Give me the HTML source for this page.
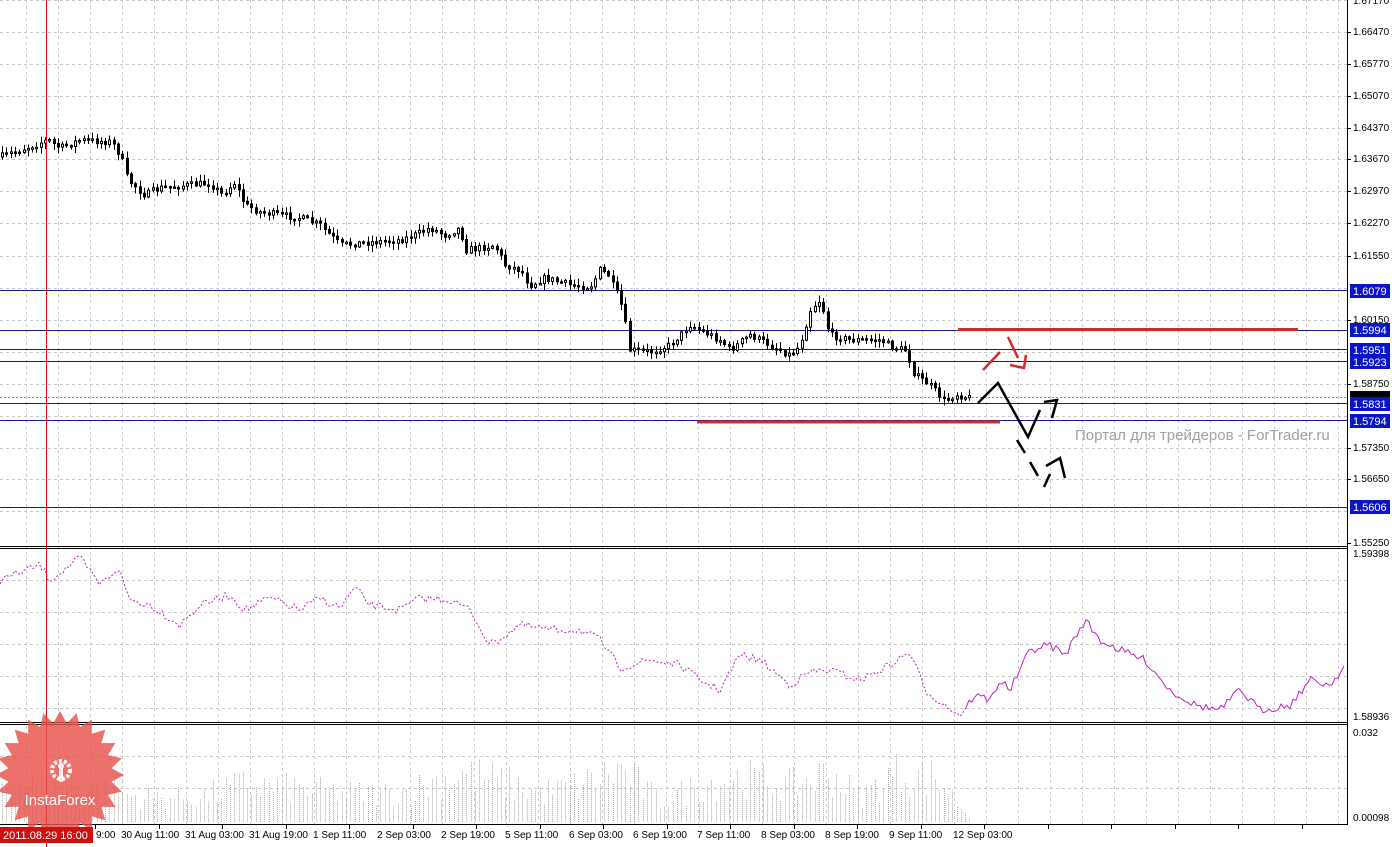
<!DOCTYPE html>
<html><head><meta charset="utf-8"><style>
html,body{margin:0;padding:0;background:#fff;}
body{width:1392px;height:847px;overflow:hidden;position:relative;font-family:"Liberation Sans",sans-serif;}
svg{position:absolute;left:0;top:0;}
.ax{font-family:"Liberation Sans",sans-serif;font-size:10px;fill:#000;}
</style></head><body>
<svg id="s" width="1392" height="847" viewBox="0 0 1392 847">
<rect width="1392" height="847" fill="#fff"/>
<g id="grid" stroke="#c8c8c8" stroke-dasharray="3,3" stroke-width="1"></g>
<line x1="0" y1="546.5" x2="1348" y2="546.5" stroke="#000"/>
<line x1="0" y1="548.5" x2="1348" y2="548.5" stroke="#000"/>
<line x1="0" y1="722.5" x2="1348" y2="722.5" stroke="#000"/>
<line x1="0" y1="724.5" x2="1348" y2="724.5" stroke="#000"/>
<line x1="0" y1="824.5" x2="1348" y2="824.5" stroke="#000"/>
<line x1="1347.5" y1="0" x2="1347.5" y2="825" stroke="#000"/>
<g stroke="#1a1a8c" stroke-width="1">
<line x1="0" y1="290.5" x2="1348" y2="290.5"/>
<line x1="0" y1="330.5" x2="1348" y2="330.5"/>
<line x1="0" y1="349.5" x2="1348" y2="349.5"/>
<line x1="0" y1="361.5" x2="1348" y2="361.5"/>
<line x1="0" y1="403.5" x2="1348" y2="403.5"/>
<line x1="0" y1="420.5" x2="1348" y2="420.5"/>
<line x1="0" y1="507.5" x2="1348" y2="507.5"/>
</g>
<line x1="0" y1="397.5" x2="1348" y2="397.5" stroke="#888" stroke-dasharray="2,2"/>
<g id="vol" stroke="#a8a8a8" stroke-width="1" stroke-dasharray="1,1"></g>
<g id="candles" stroke="#000" stroke-width="1"></g>
<polyline id="ind1" fill="none" stroke="#c020c0" stroke-width="1" stroke-dasharray="2,2"/>
<polyline id="ind2" fill="none" stroke="#c020c0" stroke-width="1"/>
<line x1="46.5" y1="0" x2="46.5" y2="847" stroke="#d01010" stroke-width="1"/>
<line x1="958" y1="329.5" x2="1298" y2="329.5" stroke="#d42a2a" stroke-width="3"/>
<line x1="697" y1="422" x2="1000" y2="422" stroke="#d42a2a" stroke-width="3"/>
<g stroke="#d42a2a" stroke-width="2.5" fill="none">
<line x1="983" y1="370" x2="1000" y2="352"/>
<line x1="1008" y1="337" x2="1018" y2="358"/>
<polyline points="1010,365 1024,368 1026,355"/>
</g>
<g stroke="#000" stroke-width="2.5" fill="none">
<polyline points="978,403 998,383 1028,437 1040,410"/>
<polyline points="1044,402 1057,400 1052,418"/>
<line x1="1017" y1="440" x2="1025" y2="453"/>
<line x1="1030" y1="462" x2="1038" y2="476"/>
<line x1="1044" y1="487" x2="1050" y2="474"/>
<polyline points="1046,466 1060,458 1065,478"/>
</g>
<text x="1075" y="440" font-size="15" fill="#a0a0a0" font-family="Liberation Sans, sans-serif">Портал для трейдеров - ForTrader.ru</text>
<g class="ax">
<text x="1353" y="4">1.67170</text>
<text x="1353" y="35">1.66470</text>
<text x="1353" y="67">1.65770</text>
<text x="1353" y="99">1.65070</text>
<text x="1353" y="131">1.64370</text>
<text x="1353" y="162">1.63670</text>
<text x="1353" y="194">1.62970</text>
<text x="1353" y="226">1.62270</text>
<text x="1353" y="259">1.61550</text>
<text x="1353" y="323">1.60150</text>
<text x="1353" y="387">1.58750</text>
<text x="1353" y="451">1.57350</text>
<text x="1353" y="482">1.56650</text>
<text x="1353" y="546">1.55250</text>
<text x="1353" y="557">1.59398</text>
<text x="1353" y="720">1.58936</text>
<text x="1353" y="736">0.032</text>
<text x="1353" y="821">0.00098</text>
</g>
<g stroke="#000"><line x1="1348" y1="32.5" x2="1351" y2="32.5"/><line x1="1348" y1="64.5" x2="1351" y2="64.5"/><line x1="1348" y1="96.5" x2="1351" y2="96.5"/><line x1="1348" y1="128.5" x2="1351" y2="128.5"/><line x1="1348" y1="159.5" x2="1351" y2="159.5"/><line x1="1348" y1="191.5" x2="1351" y2="191.5"/><line x1="1348" y1="223.5" x2="1351" y2="223.5"/><line x1="1348" y1="256.5" x2="1351" y2="256.5"/><line x1="1348" y1="320.5" x2="1351" y2="320.5"/><line x1="1348" y1="384.5" x2="1351" y2="384.5"/><line x1="1348" y1="448.5" x2="1351" y2="448.5"/><line x1="1348" y1="479.5" x2="1351" y2="479.5"/><line x1="1348" y1="543.5" x2="1351" y2="543.5"/></g>
<g font-family="Liberation Sans, sans-serif" font-size="11">
<rect x="1350" y="284" width="40" height="14" fill="#0a14c8"/><text x="1353" y="295" fill="#fff">1.6079</text>
<rect x="1350" y="323" width="40" height="14" fill="#0a14c8"/><text x="1353" y="334" fill="#fff">1.5994</text>
<rect x="1350" y="343" width="40" height="14" fill="#0a14c8"/><text x="1353" y="354" fill="#fff">1.5951</text>
<rect x="1350" y="355" width="40" height="14" fill="#0a14c8"/><text x="1353" y="366" fill="#fff">1.5923</text>
<rect x="1350" y="391" width="40" height="8" fill="#000"/>
<rect x="1350" y="397" width="40" height="14" fill="#0a14c8"/><text x="1353" y="408" fill="#fff">1.5831</text>
<rect x="1350" y="414" width="40" height="14" fill="#0a14c8"/><text x="1353" y="425" fill="#fff">1.5794</text>
<rect x="1350" y="500" width="40" height="14" fill="#0a14c8"/><text x="1353" y="511" fill="#fff">1.5606</text>
</g>
<g class="ax">
<text x="96" y="838">9:00</text>
<text x="121" y="838">30 Aug 11:00</text>
<text x="185" y="838">31 Aug 03:00</text>
<text x="249" y="838">31 Aug 19:00</text>
<text x="313" y="838">1 Sep 11:00</text>
<text x="377" y="838">2 Sep 03:00</text>
<text x="441" y="838">2 Sep 19:00</text>
<text x="505" y="838">5 Sep 11:00</text>
<text x="569" y="838">6 Sep 03:00</text>
<text x="633" y="838">6 Sep 19:00</text>
<text x="697" y="838">7 Sep 11:00</text>
<text x="761" y="838">8 Sep 03:00</text>
<text x="825" y="838">8 Sep 19:00</text>
<text x="889" y="838">9 Sep 11:00</text>
<text x="953" y="838">12 Sep 03:00</text>
</g>
<g stroke="#000" id="tt"></g>
<polygon id="star" fill="#e8504a" fill-opacity="0.82"/>
<g fill="#fff" fill-opacity="0.9">
<circle cx="61" cy="770" r="9" fill="none" stroke="#fff" stroke-width="4" stroke-dasharray="3,2"/>
<rect x="59" y="768" width="4" height="14"/>
<circle cx="61" cy="766" r="3"/>
</g>
<text x="60" y="805" text-anchor="middle" font-size="15" fill="#fff" font-family="Liberation Sans, sans-serif">InstaForex</text>
<rect x="0" y="827" width="93" height="16" fill="#d01010"/>
<text x="3" y="839" font-size="11" fill="#fff" font-family="Liberation Sans, sans-serif">2011.08.29 16:00</text>
</svg>
<script>
var NS="http://www.w3.org/2000/svg";
function el(p,t,a){var e=document.createElementNS(NS,t);for(var k in a)e.setAttribute(k,a[k]);p.appendChild(e);return e;}
var seed=7;function rnd(){seed=(seed*16807)%2147483647;return (seed-1)/2147483646;}
function interp(pts,x){for(var i=0;i<pts.length-1;i++){if(x>=pts[i][0]&&x<=pts[i+1][0]){var t=(x-pts[i][0])/(pts[i+1][0]-pts[i][0]);return pts[i][1]+t*(pts[i+1][1]-pts[i][1]);}}return pts[pts.length-1][1];}
var g=document.getElementById('grid');
for(var x=26;x<1347;x+=32){el(g,'line',{x1:x+.5,y1:0,x2:x+.5,y2:824});}
[0,32,64,96,128,159,191,223,256,288,320,352,384,416,448,479,511].forEach(function(y){el(g,'line',{x1:0,y1:y+.5,x2:1347,y2:y+.5});});
[580,612,644,676,708].forEach(function(y){el(g,'line',{x1:0,y1:y+.5,x2:1347,y2:y+.5});});
[756,788].forEach(function(y){el(g,'line',{x1:0,y1:y+.5,x2:1347,y2:y+.5});});
var tt=document.getElementById('tt');
for(var x=95;x<1347;x+=63.5){el(tt,'line',{x1:Math.round(x)+.5,y1:825,x2:Math.round(x)+.5,y2:829});}
var P=[[0,157],[20,150],[48,140],[60,148],[80,140],[112,142],[120,155],[128,180],[145,195],[160,188],[210,183],[222,195],[235,182],[245,205],[260,212],[300,218],[320,225],[340,245],[360,243],[400,240],[415,235],[430,228],[445,235],[460,228],[465,250],[480,248],[495,245],[505,265],[520,270],[530,285],[545,278],[570,285],[590,287],[600,270],[608,275],[620,300],[630,350],[650,352],[670,345],[690,325],[700,330],[720,340],[730,350],[750,335],[770,345],[790,355],[800,345],[810,310],[820,300],[830,335],[850,340],[880,340],[895,348],[905,350],[915,375],[930,385],[945,402],[955,394],[970,398]];
var c=document.getElementById('candles');var prev=interp(P,0);
for(var x=2;x<=970;x+=4.3){var xi=Math.round(x);var cl=interp(P,xi)+(rnd()-.5)*7;var o=prev;var hi=Math.min(o,cl)-rnd()*6-1,lo=Math.max(o,cl)+rnd()*6+1;
el(c,'line',{x1:xi+.5,y1:hi,x2:xi+.5,y2:lo});
var t=Math.min(o,cl),h=Math.max(Math.abs(o-cl),1.5);
el(c,'rect',{x:xi-0.5,y:t,width:2,height:h,fill:cl<o?'#fff':'#000',stroke:'#000','stroke-width':1});prev=cl;}
var I=[[0,580],[40,565],[50,580],[80,558],[100,585],[118,568],[130,600],[150,605],[180,625],[200,605],[230,595],[245,610],[270,598],[300,610],[320,598],[340,608],[355,588],[370,605],[400,610],[420,598],[450,600],[470,610],[490,645],[520,625],[550,630],[580,630],[600,640],[620,668],[650,660],[680,665],[700,680],[720,690],[740,655],[760,660],[790,685],[810,672],[830,670],[860,680],[890,665],[910,652],[925,690],[945,705],[960,715],[975,695],[990,700],[1000,680],[1010,690],[1030,650],[1050,645],[1065,655],[1085,620],[1100,640],[1120,650],[1145,660],[1170,690],[1195,705],[1220,710],[1240,690],[1260,710],[1290,705],[1310,680],[1330,685],[1345,665]];
var a=[],b=[];for(var x=0;x<=1345;x+=3){var y=(interp(I,x)+(rnd()-.5)*8).toFixed(1);if(x<=966)a.push(x+','+y);if(x>=964)b.push(x+','+y);}
document.getElementById('ind1').setAttribute('points',a.join(' '));document.getElementById('ind2').setAttribute('points',b.join(' '));
var V=[[0,50],[100,40],[140,30],[200,30],[240,45],[300,40],[340,35],[400,35],[460,60],[500,50],[540,35],[580,45],[620,65],[660,25],[700,45],[740,55],[790,45],[830,60],[860,30],[895,60],[935,55],[960,20],[970,5]];
var v=document.getElementById('vol');
for(var x=2;x<=972;x+=4.3){var xi=Math.round(x);var h=interp(V,xi)*(0.4+rnd()*0.8);el(v,'line',{x1:xi+.5,y1:822-h,x2:xi+.5,y2:822});}
var pts=[],cx=60,cy=775,n=24;for(var i=0;i<n*2;i++){var r=i%2?52:64;var an=i*Math.PI/n;pts.push((cx+r*Math.cos(an)).toFixed(1)+','+(cy+r*Math.sin(an)).toFixed(1));}
document.getElementById('star').setAttribute('points',pts.join(' '));
</script>
</body></html>
